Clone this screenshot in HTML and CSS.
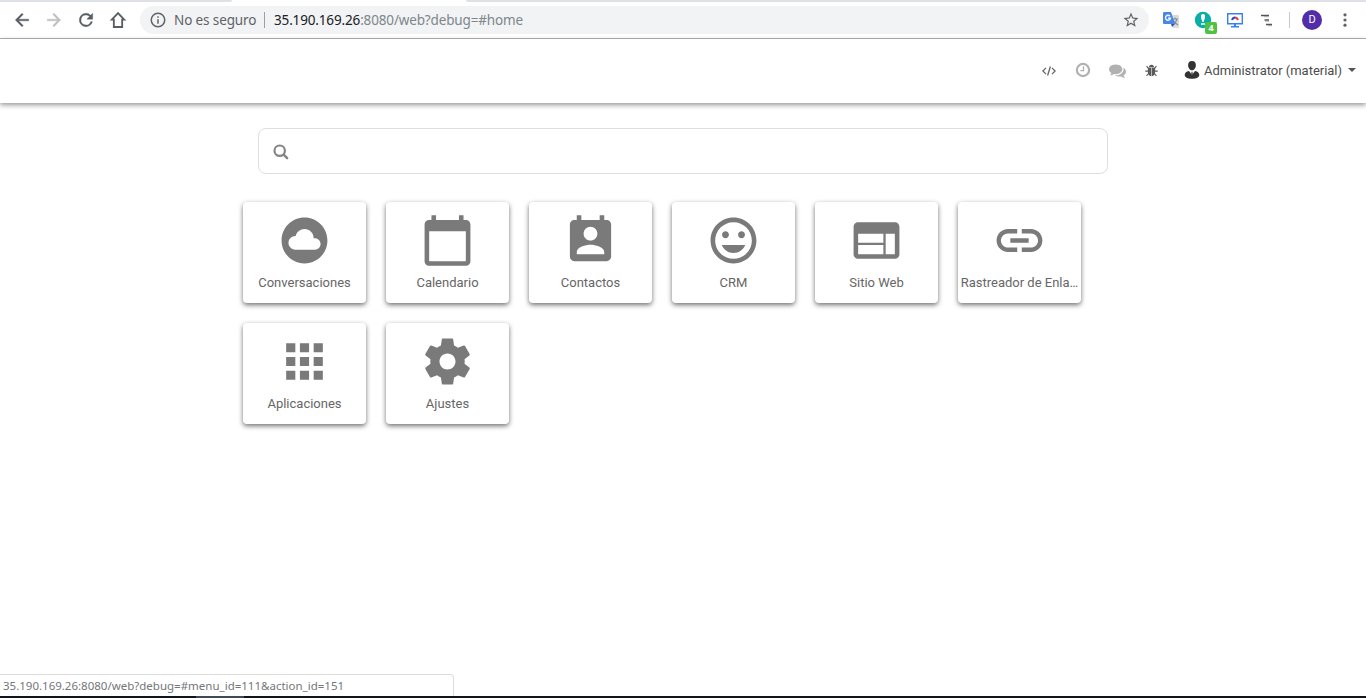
FILE: index.html
```
<!DOCTYPE html>
<html lang="es">
<head>
<meta charset="utf-8">
<title>Odoo</title>
<link rel="stylesheet" href="styles.css">
</head>
<body>
<div class="window">
  <div class="browser">
    <div class="tabstrip"><span class="tab-left"></span><span class="tab-right"></span></div>
    <div class="toolbar">
      <div class="nav-buttons">
        <svg class="tb" viewBox="0 0 24 24"><path d="M20 11H7.830l5.590-5.590L12 4l-8 8 8 8 1.410-1.410L7.830 13H20v-2z" stroke="#5a5d61" stroke-width=".5"/></svg>
        <svg class="tb dim" viewBox="0 0 24 24"><path d="M12 4l-1.410 1.410L16.170 11H4v2h12.170l-5.580 5.590L12 20l8-8z" stroke="#bcbec0" stroke-width=".5"/></svg>
        <svg class="tb" viewBox="0 0 24 24"><path d="M17.650 6.350A7.960 7.960 0 0 0 12 4a8 8 0 1 0 7.730 10h-2.080A6 6 0 1 1 12 6c1.660 0 3.140.69 4.220 1.780L13 11h7V4z" stroke="#5a5d61" stroke-width=".5"/></svg>
        <svg class="tb" viewBox="0 0 24 24"><path fill="none" stroke="#5a5d61" stroke-width="2.200" d="M12 3.800 4.600 11.500H7v8.900h10v-8.900h2.400z"/></svg>
      </div>
      <div class="omnibox">
        <svg class="info" viewBox="0 0 24 24"><path d="M11 17h2v-6h-2zm1-15a10 10 0 1 0 0 20 10 10 0 0 0 0-20zm0 18a8 8 0 1 1 0-16 8 8 0 0 1 0 16zM11 9h2V7h-2z"/></svg>
        <span class="insecure">No es seguro</span>
        <span class="sep"></span>
        <span class="url"><b>35.190.169.26</b>:8080/web?debug=#home</span>
        <svg class="star" viewBox="0 0 24 24"><path d="M22 9.240l-7.190-.62L12 2 9.190 8.630 2 9.240l5.460 4.730L5.820 21 12 17.270 18.180 21l-1.630-7.030zM12 15.400l-3.760 2.270 1-4.280-3.320-2.880 4.380-.38L12 6.100l1.710 4.040 4.380.38-3.320 2.880 1 4.280z"/></svg>
      </div>
      <div class="extensions">
        <svg class="ext" viewBox="0 0 18 18"><path fill="#d9dbdd" d="M7 4h9q1 0 1 1v12h-6z"/><path fill="none" stroke="#7b909c" stroke-width="1.200" d="M10 8h6M13 6.500v2M15 8q-1 4-4 6M11 9q1 3 5 5"/><path fill="#4a86e8" d="M2 1h7l4 12H2q-1 0-1-1V2q0-1 1-1z"/><path fill="#2b59b5" d="m9 13h4l-3 3z"/><path fill="none" stroke="#fff" stroke-width="1.300" d="M8 5.200a2.500 2.500 0 1 0 .5 2H6"/></svg>
        <span class="ext eye"><svg viewBox="0 0 18 18"><circle cx="9" cy="9" r="8.200" fill="#0bada8"/><path fill="#fff" d="M7 4q2-1.800 4 0v2.800L9.600 11H8.400L7 6.800z"/><path stroke="#fff" stroke-width="1.500" d="M7 13h4"/></svg><i class="badge">4</i></span>
        <svg class="ext" viewBox="0 0 18 18"><path fill="#fff" stroke="#3481f5" stroke-width="1.400" d="M1.700 2.700h14.600v10H1.700z"/><path fill="#3481f5" d="M8 13h2v2h3v1.500H5V15h3z"/><path fill="none" stroke="#2047c9" stroke-width="2" d="M6 9q1-2.500 3-2.500"/><path fill="none" stroke="#e33b3b" stroke-width="2" d="M9 6.500q2 0 3 2.500"/></svg>
        <svg class="ext" viewBox="0 0 18 18"><path stroke="#555" stroke-width="1.500" fill="none" d="M3 4.500h8M6.500 9h4.500M8 13.500h6"/><path stroke="#999" stroke-width=".8" d="M6 5.700h5M7 10.200h4M10 14.700h4"/></svg>
      </div>
      <span class="divider"></span>
      <span class="avatar">D</span>
      <svg class="dots" viewBox="0 0 4 16"><circle cx="2" cy="2.800" r="1.600"/><circle cx="2" cy="8" r="1.600"/><circle cx="2" cy="13.200" r="1.600"/></svg>
    </div>
  </div>

  <header class="navbar">
    <svg class="sys code" viewBox="0 0 14 10"><path fill="none" stroke="#666" stroke-width="1.300" d="M4 1.900.9 5 4 8.100M10 1.900 13.100 5 10 8.100M8.400.5 5.600 9.500"/></svg>
    <svg class="sys clock" viewBox="0 0 16 16"><circle cx="8" cy="8" r="6.100" fill="none" stroke="#b1b1b1" stroke-width="2.200"/><path fill="none" stroke="#b1b1b1" stroke-width="1.300" d="M8.500 4.200v4.500H5.300"/></svg>
    <svg class="sys chat" viewBox="0 0 1792 1536"><path fill="#b1b1b1" d="M1408 640q0 139-94 257t-256.500 186.500T704 1152q-86 0-176-16-124 88-278 128-36 9-86 16h-3q-11 0-20.500-8t-11.500-21q-1-3-1-6.500t.5-6.500 2-6l2.500-5 3.500-5.500 4-5 4.500-5 4-4.500q5-6 23-25t26-29.500 22.500-29 25-38.500 20.500-44q-124-72-195-177T0 640q0-139 94-257t256.500-186.500T704 128t353.500 68.500T1314 383t94 257zm384 256q0 120-71 224.500T1526 1298q10 24 20.500 44t25 38.500 22.500 29 26 29.500 23 25q1 1 4 4.500t4.500 5 4 5 3.500 5.500l2.500 5 2 6 .5 6.500-1 6.500q-3 14-13 22t-22 7q-50-7-86-16-154-40-278-128-90 16-176 16-271 0-472-132 58 4 88 4 161 0 309-45t264-129q125-92 192-212t67-254q0-77-23-152 129 71 204 178t75 230z"/></svg>
    <svg class="sys bug" viewBox="0 0 14 14"><path fill="#5a5a5a" d="M4.300 3.400a2.700 2.700 0 0 1 5.400 0zM3.100 4h3.600v9.300q-3.600-.6-3.600-4.300zm4.200 0h3.600v5q0 3.700-3.600 4.300z"/><path fill="none" stroke="#5a5a5a" stroke-width="1.200" d="M1.700 2.200 4 5M12.300 2.200 10 5M.3 7.700H4M13.700 7.700H10M1.700 12.700 4.300 9.700M12.300 12.700 9.700 9.700"/></svg>
    <div class="user">
      <svg class="person" viewBox="0 0 16 18"><path fill="#333" d="M8 0c2.600 0 3.900 1.600 3.900 4.200C11.900 7 10 9.300 8 9.300S4.100 7 4.100 4.200C4.100 1.600 5.400 0 8 0zM5 9.900l3 3.300 3-3.300c3 .6 4.300 2 4.300 4.200 0 2.400-3 3.700-7.300 3.700S.7 16.500.7 14.100c0-2.200 1.300-3.600 4.300-4.200z"/><path fill="#fff" d="m5.500 9.700 2.500.8 2.500-.8L8.400 14h-.8z"/><path fill="#333" d="M7.500 10.800h1l.4 3.200H7.100z"/></svg>
      <span class="username">Administrator (material)</span>
      <span class="caret"></span>
    </div>
  </header>

  <main class="home">
    <div class="search">
      <svg viewBox="0 0 16 16"><circle cx="6.700" cy="6.700" r="5.200" fill="none" stroke="#858585" stroke-width="2.200"/><path stroke="#858585" stroke-width="2.500" stroke-linecap="round" d="m10.700 10.700 3.400 3.400"/></svg>
    </div>
    <div class="apps">
      <a class="app"><svg viewBox="0 0 24 24"><path d="M12 2C6.480 2 2 6.480 2 12s4.480 10 10 10 10-4.480 10-10S17.520 2 12 2zm4.500 14H8c-1.660 0-3-1.340-3-3s1.340-3 3-3l.14.01C8.580 8.280 10.130 7 12 7c2.210 0 4 1.790 4 4h.5c1.380 0 2.500 1.120 2.500 2.500S17.880 16 16.500 16z"/></svg><span>Conversaciones</span></a>
      <a class="app"><svg viewBox="0 0 24 24"><path d="M20 3h-1V1h-2v2H7V1H5v2H4c-1.100 0-2 .9-2 2v16c0 1.100.9 2 2 2h16c1.100 0 2-.9 2-2V5c0-1.100-.9-2-2-2zm0 18H4V8h16v13z"/></svg><span>Calendario</span></a>
      <a class="app"><svg viewBox="0 0 24 24"><path d="M19 3h-1V1h-2v2H8V1H6v2H5c-1.110 0-2 .9-2 2v14c0 1.100.89 2 2 2h14c1.100 0 2-.9 2-2V5c0-1.100-.9-2-2-2zm-7 3c1.660 0 3 1.340 3 3s-1.340 3-3 3-3-1.340-3-3 1.340-3 3-3zm6 12H6v-1c0-2 4-3.100 6-3.100s6 1.100 6 3.100v1z"/></svg><span>Contactos</span></a>
      <a class="app"><svg viewBox="0 0 24 24"><path d="M11.990 2C6.470 2 2 6.480 2 12s4.470 10 9.990 10C17.520 22 22 17.520 22 12S17.520 2 11.990 2zM12 20c-4.420 0-8-3.580-8-8s3.580-8 8-8 8 3.580 8 8-3.580 8-8 8zm3.500-9c.83 0 1.500-.67 1.500-1.500S16.330 8 15.500 8 14 8.670 14 9.500s.67 1.500 1.500 1.500zm-7 0c.83 0 1.500-.67 1.500-1.500S9.330 8 8.500 8 7 8.670 7 9.500 7.670 11 8.500 11zm3.500 6.500c2.330 0 4.310-1.460 5.110-3.500H6.890c.8 2.040 2.780 3.500 5.110 3.500z"/></svg><span>CRM</span></a>
      <a class="app"><svg viewBox="0 0 24 24"><path d="M20 4H4c-1.100 0-1.990.9-1.990 2L2 18c0 1.100.9 2 2 2h16c1.100 0 2-.9 2-2V6c0-1.100-.9-2-2-2zm-5 14H4v-4h11v4zm0-5H4V9h11v4zm5 5h-4V9h4v9z"/></svg><span>Sitio Web</span></a>
      <a class="app"><svg viewBox="0 0 24 24"><path d="M3.900 12c0-1.710 1.390-3.100 3.100-3.100h4V7H7c-2.760 0-5 2.240-5 5s2.240 5 5 5h4v-1.900H7c-1.710 0-3.100-1.390-3.100-3.100zM8 13h8v-2H8v2zm9-6h-4v1.900h4c1.710 0 3.100 1.390 3.100 3.100s-1.390 3.100-3.100 3.100h-4V17h4c2.760 0 5-2.240 5-5s-2.240-5-5-5z"/></svg><span>Rastreador de Enla…</span></a>
      <a class="app"><svg viewBox="0 0 24 24"><path d="M4 8h4V4H4v4zm6 12h4v-4h-4v4zm-6 0h4v-4H4v4zm0-6h4v-4H4v4zm6 0h4v-4h-4v4zm6-10v4h4V4h-4zm-6 4h4V4h-4v4zm6 6h4v-4h-4v4zm0 6h4v-4h-4v4z"/></svg><span>Aplicaciones</span></a>
      <a class="app"><svg viewBox="0 0 24 24"><path d="M19.430 12.980c.04-.32.07-.64.07-.98s-.03-.66-.07-.98l2.110-1.650c.19-.15.24-.42.12-.64l-2-3.460c-.12-.22-.39-.3-.61-.22l-2.490 1c-.52-.4-1.080-.73-1.690-.98l-.38-2.650C14.460 2.180 14.250 2 14 2h-4c-.25 0-.46.18-.49.42l-.38 2.650c-.61.25-1.170.59-1.690.98l-2.490-1c-.23-.09-.49 0-.61.22l-2 3.460c-.13.22-.07.49.12.64l2.110 1.650c-.04.32-.07.65-.07.98s.03.66.07.98l-2.110 1.650c-.19.15-.24.42-.12.64l2 3.460c.12.22.39.3.61.22l2.490-1c.52.4 1.080.73 1.690.98l.38 2.650c.03.24.24.42.49.42h4c.25 0 .46-.18.49-.42l.38-2.650c.61-.25 1.170-.59 1.690-.98l2.490 1c.23.09.49 0 .61-.22l2-3.460c.12-.22.07-.49-.12-.64l-2.110-1.650zM12 15.500c-1.930 0-3.500-1.570-3.500-3.500s1.570-3.500 3.500-3.500 3.500 1.570 3.500 3.500-1.570 3.500-3.500 3.500z"/></svg><span>Ajustes</span></a>
    </div>
  </main>

  <footer class="bottom">
    <div class="status">35.190.169.26:8080/web?debug=#menu_id=111&amp;action_id=151</div>
    <div class="taskbar"><span></span></div>
  </footer>
</div>
</body>
</html>
```
FILE: styles.css
```
* { box-sizing: border-box; }
body { margin: 0; background: #fff; font-family: Roboto, sans-serif; overflow: hidden; }
svg { display: block; flex: none; }
.window { display: flex; flex-direction: column; height: 698px; }

.browser { flex: none; height: 39px; border-bottom: 1px solid #b3b3b3; font-family: "Noto Sans", sans-serif; }
.tabstrip { display: flex; justify-content: space-between; height: 2px; }
.tab-left { width: 232px; background: #dee1e6; border-bottom-right-radius: 3px; }
.tab-right { width: 900px; background: #dee1e6; border-bottom-left-radius: 3px; }
.toolbar { display: flex; align-items: center; height: 36px; padding-left: 12px; }
.nav-buttons { display: flex; gap: 12px; }
.tb { width: 20px; height: 20px; fill: #5a5d61; }
.tb.dim { fill: #bcbec0; }
.omnibox { display: flex; align-items: center; width: 1009px; height: 28px; margin-left: 12px; padding: 0 9px 0 9px; border-radius: 14px; background: #f1f3f4; font-size: 14px; color: #5f6368; }
.info { width: 18px; height: 18px; fill: #5f6368; }
.insecure { width: 82px; margin-left: 7px; font-size: 13.5px; letter-spacing: -.12px; white-space: nowrap; }
.sep { width: 1px; height: 16px; margin: 0 9px 0 8px; background: #9aa0a6; }
.url { color: #80868b; font-size: 13.5px; letter-spacing: -.15px; white-space: nowrap; }
.url b { font-weight: 400; color: #202124; }
.star { width: 18px; height: 18px; margin-left: auto; fill: #5f6368; }
.extensions { display: flex; gap: 14px; margin-left: 13px; }
.ext { width: 18px; height: 18px; }
.eye { position: relative; }
.badge { position: absolute; left: 11px; top: 11px; width: 12px; height: 12px; border-radius: 2px; background: #4fc143; color: #fff; font: bold 9px/12px "Noto Sans", sans-serif; text-align: center; }
.divider { width: 1px; height: 16px; margin-left: 13px; background: #c6c8ca; }
.avatar { width: 20px; height: 20px; margin-left: 12px; border-radius: 50%; background: #512da8; color: #fff; font: 11px/20px Roboto, sans-serif; text-align: center; }
.dots { width: 4px; height: 16px; margin-left: 21px; fill: #5f6368; }

.navbar { display: flex; flex: none; align-items: center; justify-content: flex-end; height: 64px; padding-right: 10px; box-shadow: 0 2px 5px rgba(0, 0, 0, .42); }
.code { width: 14px; height: 10px; }
.clock { width: 16px; height: 16px; margin-left: 19px; margin-top: -2px; }
.chat { width: 17px; height: 15px; margin-left: 18px; margin-top: -2px; }
.bug { width: 13px; height: 13px; margin-left: 19px; margin-top: -1px; }
.user { display: flex; align-items: center; margin-left: 26px; color: #4c4c4c; }
.person { width: 16px; height: 18px; margin-top: -2px; }
.username { width: 138px; margin: -1px 0 0 4px; font-size: 13px; letter-spacing: -.02px; white-space: nowrap; }
.caret { margin: -3px 0 0 6px; border: 4px solid transparent; border-top-color: #555; border-bottom: 0; }

.home { display: flex; flex: 1; flex-direction: column; align-items: center; padding-top: 25px; }
.search { display: flex; flex: none; align-items: center; width: 850px; height: 46px; padding-left: 14px; border: 1px solid #dedede; border-radius: 8px; }
.search svg { width: 16px; height: 16px; margin-top: 2px; }
.apps { display: grid; grid-template-columns: repeat(6, 123px); gap: 20px; width: 880px; margin-top: 28px; margin-right: 1px; }
.app { display: flex; flex-direction: column; align-items: center; height: 101px; padding-top: 11px; border-radius: 4px; background: #fff; box-shadow: 0 2px 5px rgba(0, 0, 0, .56); font-size: 13px; color: #666; }
.app svg { width: 55px; height: 55px; fill: #7a7a7a; }
.app span { margin: 6px 0 0 1px; line-height: 18px; white-space: nowrap; }

.bottom { flex: none; height: 24px; }
.status { width: 454px; height: 22px; padding-left: 3px; border: solid #dcdcdc; border-width: 1px 1px 0 0; border-top-right-radius: 4px; font: 11.5px/22px "Noto Sans", sans-serif; color: #73767a; white-space: nowrap; }
.taskbar { height: 2px; padding-left: 196px; background: #111419; }
.taskbar span { display: block; width: 48px; height: 2px; background: #414953; }
```
